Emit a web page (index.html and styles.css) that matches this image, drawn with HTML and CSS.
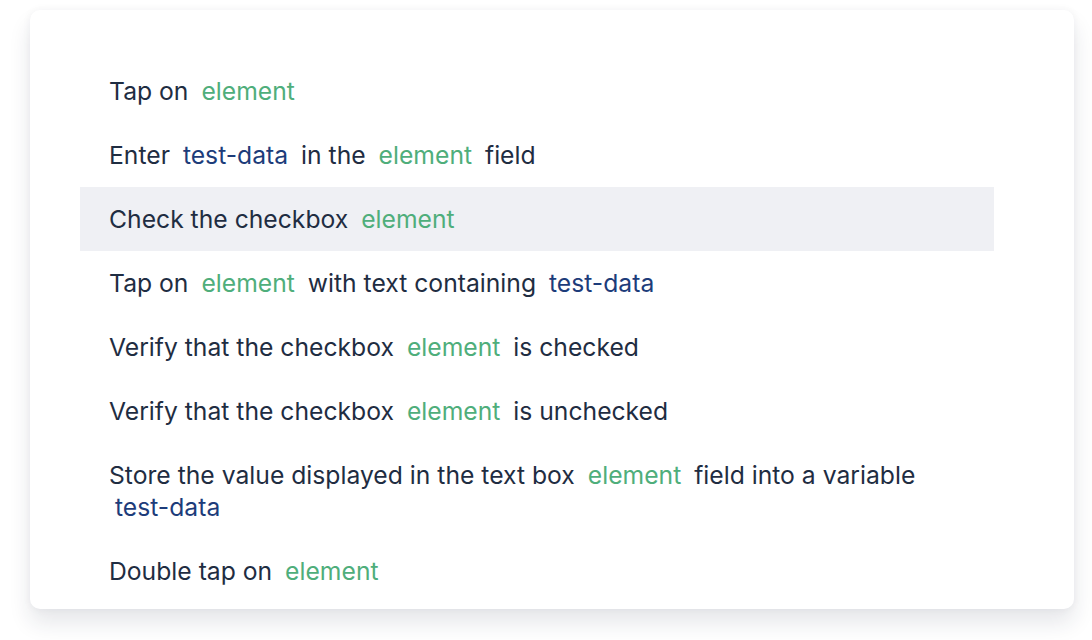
FILE: index.html
```html
<!DOCTYPE html>
<html>
<head>
<meta charset="utf-8">
<link rel="stylesheet" href="styles.css">
</head>
<body>
<div class="card">
  <ul class="list">
    <li class="item">Tap on <span class="el">element</span></li>
    <li class="item">Enter <span class="data">test-data</span> in the <span class="el">element</span> field</li>
    <li class="item active">Check the checkbox <span class="el">element</span></li>
    <li class="item">Tap on <span class="el">element</span> with text containing <span class="data">test-data</span></li>
    <li class="item">Verify that the checkbox <span class="el">element</span> is checked</li>
    <li class="item">Verify that the checkbox <span class="el">element</span> is unchecked</li>
    <li class="item">Store the value displayed in the text box <span class="el">element</span> field into a variable <span class="data">test-data</span></li>
    <li class="item">Double tap on <span class="el">element</span></li>
  </ul>
</div>
</body>
</html>
```
FILE: styles.css
```css
html, body {
  margin: 0;
  padding: 0;
  background: #ffffff;
}
body {
  padding: 10px 18px 0 30px;
  font-family: Inter, "Noto Sans", sans-serif;
  overflow: hidden;
  height: 640px;
  box-sizing: border-box;
}
.card {
  background: #ffffff;
  border-radius: 10px;
  box-shadow: 0 14px 22px rgba(30, 40, 60, 0.11), 0 0 8px rgba(30, 40, 60, 0.05);
  padding: 49px 80px 6px 50px;
  height: 599px;
  box-sizing: border-box;
}
.list {
  list-style: none;
  margin: 0;
  padding: 0;
}
.item {
  padding: 16px 29px;
  line-height: 32px;
  font-size: 24.7px;
  color: #1f2d42;
}
.item.active {
  background: #eff0f4;
}
.el, .data {
  padding: 0 6px;
}
.el {
  color: #4fae7b;
}
.data {
  color: #1d3c7a;
}
```
